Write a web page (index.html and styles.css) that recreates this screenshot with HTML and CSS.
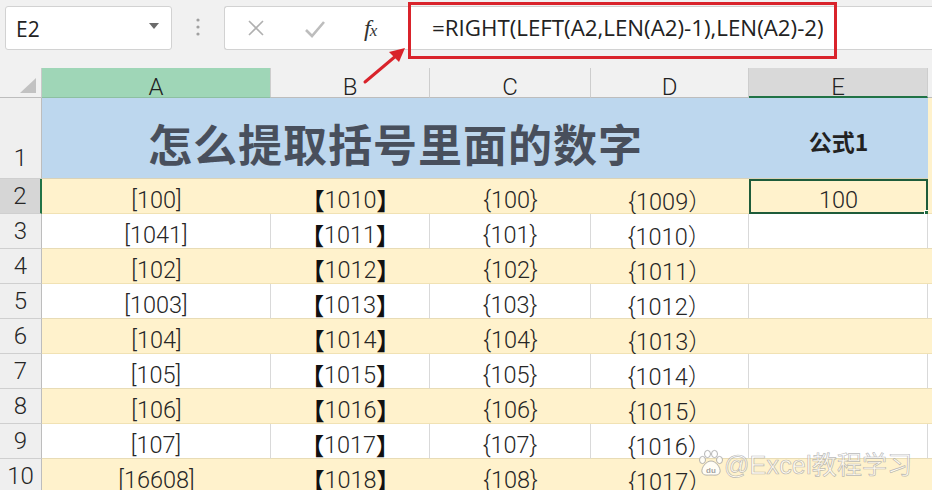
FILE: index.html
```html
<!DOCTYPE html>
<html lang="zh">
<head>
<meta charset="utf-8">
<link rel="stylesheet" href="styles.css">
</head>
<body>
<div class="app">
  <div class="toolbar">
    <div class="namebox">
      <span class="ref">E2</span>
      <svg class="caret" width="12" height="8" viewBox="0 0 12 8"><path d="M1 1 L11 1 L6 7 Z" fill="#6b6b6b"/></svg>
    </div>
    <div class="sep">
      <svg width="6" height="20" viewBox="0 0 6 20"><circle cx="3" cy="3" r="1.6" fill="#a0a0a0"/><circle cx="3" cy="10" r="1.6" fill="#a0a0a0"/><circle cx="3" cy="17" r="1.6" fill="#a0a0a0"/></svg>
    </div>
    <div class="fbar">
      <div class="fbtns">
        <svg class="btn-x" width="18" height="18" viewBox="0 0 18 18"><path d="M2 2 L16 16 M16 2 L2 16" stroke="#b0b0b0" stroke-width="1.6" fill="none"/></svg>
        <svg class="btn-ok" width="22" height="18" viewBox="0 0 22 18"><path d="M2 10 L8 16 L20 2" stroke="#bdbdbd" stroke-width="2.6" fill="none"/></svg>
        <span class="fx">f<span class="fxx">x</span></span>
      </div>
      <div class="formula">=RIGHT(LEFT(A2,LEN(A2)-1),LEN(A2)-2)</div>
    </div>
  </div>

  <div class="sheet">
    <div class="corner"><span class="tri"></span></div>
    <div class="ch ch-a">A</div>
    <div class="ch">B</div>
    <div class="ch">C</div>
    <div class="ch">D</div>
    <div class="ch ch-e">E</div>
    <div class="ch ch-f"></div>

    <div class="rh rh-1">1</div>
    <div class="c title">怎么提取括号里面的数字</div>
    <div class="c blue sub">公式1</div>
    <div class="c f1"></div>

    <div class="rh rh-sel">2</div>
    <div class="c y">[100]</div><div class="c y"><b class="lb">【</b>1010<b class="lb">】</b></div><div class="c y">{100}</div><div class="c y">{1009）</div><div class="c y sel">100<span class="handle"></span></div><div class="c y fc"></div>

    <div class="rh">3</div>
    <div class="c w">[1041]</div><div class="c w"><b class="lb">【</b>1011<b class="lb">】</b></div><div class="c w">{101}</div><div class="c w">{1010）</div><div class="c w"></div><div class="c w fc"></div>

    <div class="rh">4</div>
    <div class="c y">[102]</div><div class="c y"><b class="lb">【</b>1012<b class="lb">】</b></div><div class="c y">{102}</div><div class="c y">{1011）</div><div class="c y"></div><div class="c y fc"></div>

    <div class="rh">5</div>
    <div class="c w">[1003]</div><div class="c w"><b class="lb">【</b>1013<b class="lb">】</b></div><div class="c w">{103}</div><div class="c w">{1012）</div><div class="c w"></div><div class="c w fc"></div>

    <div class="rh">6</div>
    <div class="c y">[104]</div><div class="c y"><b class="lb">【</b>1014<b class="lb">】</b></div><div class="c y">{104}</div><div class="c y">{1013）</div><div class="c y"></div><div class="c y fc"></div>

    <div class="rh">7</div>
    <div class="c w">[105]</div><div class="c w"><b class="lb">【</b>1015<b class="lb">】</b></div><div class="c w">{105}</div><div class="c w">{1014）</div><div class="c w"></div><div class="c w fc"></div>

    <div class="rh">8</div>
    <div class="c y">[106]</div><div class="c y"><b class="lb">【</b>1016<b class="lb">】</b></div><div class="c y">{106}</div><div class="c y">{1015）</div><div class="c y"></div><div class="c y fc"></div>

    <div class="rh">9</div>
    <div class="c w">[107]</div><div class="c w"><b class="lb">【</b>1017<b class="lb">】</b></div><div class="c w">{107}</div><div class="c w">{1016）</div><div class="c w"></div><div class="c w fc"></div>

    <div class="rh">10</div>
    <div class="c y">[16608]</div><div class="c y"><b class="lb">【</b>1018<b class="lb">】</b></div><div class="c y">{108}</div><div class="c y">{1017）</div><div class="c y"></div><div class="c y fc"></div>
  </div>

  <div class="redbox"></div>
  <svg class="arrow" width="60" height="50" viewBox="0 0 60 50">
    <path d="M4 44 L36 17" stroke="#d9232b" stroke-width="3" stroke-linecap="round" fill="none"/>
    <path d="M44 10 L28 14 L38 24 Z" fill="#d9232b"/>
  </svg>

  <div class="watermark">
    <svg class="paw" width="26" height="28" viewBox="0 0 26 28">
      <g fill="rgba(255,255,255,0.8)" stroke="rgba(150,150,150,0.7)" stroke-width="1">
        <ellipse cx="4.5" cy="11" rx="3" ry="3.6"/>
        <ellipse cx="9.5" cy="5" rx="3" ry="3.6"/>
        <ellipse cx="16.5" cy="5" rx="3" ry="3.6"/>
        <ellipse cx="21.5" cy="11" rx="3" ry="3.6"/>
        <path d="M13 12 C8 12 3 19 4 23 C5 27 10 26 13 26 C16 26 21 27 22 23 C23 19 18 12 13 12 Z"/>
      </g>
      <text x="13" y="24" text-anchor="middle" font-family="Liberation Sans, sans-serif" font-size="8" font-weight="bold" fill="rgba(150,150,150,0.9)">du</text>
    </svg>
    <span class="wm-text">@Excel教程学习</span>
  </div>
</div>
</body>
</html>
```

FILE: styles.css
```css
* { box-sizing: border-box; }
html, body { margin: 0; padding: 0; }
body {
  width: 932px;
  height: 490px;
  overflow: hidden;
  background: #ffffff;
  font-family: "Roboto", "Noto Sans CJK SC", sans-serif;
}
.app { position: relative; width: 932px; height: 490px; overflow: hidden; }

.toolbar {
  height: 68px;
  background: #f1f1f1;
  display: flex;
  align-items: flex-start;
  padding-top: 6px;
  padding-left: 5px;
}
.namebox {
  width: 167px;
  height: 44px;
  background: #fff;
  border: 1px solid #d2d2d2;
  border-radius: 3px;
  display: flex;
  align-items: center;
  justify-content: space-between;
  padding: 0 11px 0 10px;
}
.ref { font-family: "Open Sans", "Noto Sans", sans-serif; font-size: 21px; color: #222; margin-top: 2px; }
.caret { margin-top: -4px; }
.sep {
  width: 52px;
  height: 44px;
  display: flex;
  align-items: center;
  justify-content: center;
  padding-bottom: 2px;
}
.fbar {
  flex: 1;
  height: 44px;
  background: #fff;
  border: 1px solid #d2d2d2;
  border-right: none;
  border-radius: 3px 0 0 3px;
  display: flex;
  align-items: center;
}
.fbtns {
  width: 184px;
  display: flex;
  align-items: center;
  padding-left: 22px;
}
.btn-x { margin-right: 39px; }
.btn-ok { margin-right: 38px; margin-top: 2px; }
.fx {
  font-family: "Liberation Serif", serif;
  font-style: italic;
  font-size: 24px;
  color: #333;
  letter-spacing: -1px;
}
.fxx { font-size: 17px; }
.formula {
  padding-left: 23px;
  font-family: "Open Sans", "Noto Sans", sans-serif;
  font-size: 22.3px;
  color: #222;
  white-space: nowrap;
  margin-top: -2px;
}

.redbox {
  position: absolute;
  left: 408px;
  top: 2px;
  width: 429px;
  height: 57px;
  border: 3px solid #d9232b;
}
.arrow { position: absolute; left: 361px; top: 38px; }

.sheet {
  display: grid;
  grid-template-columns: 42px 229px 159px 161px 158px 179px 4px;
  grid-template-rows: 30px 81px repeat(9, 35px);
  font-family: "Roboto", "Noto Sans CJK SC", sans-serif;
  font-weight: 300;
  color: #262626;
}
.corner {
  background: #f1f1f1;
  border-right: 1px solid #c9c9c9;
  border-bottom: 1px solid #bdbdbd;
  position: relative;
}
.tri {
  position: absolute;
  right: 5px;
  bottom: 4px;
  width: 0; height: 0;
  border-left: 16px solid transparent;
  border-bottom: 15px solid #c2c2c2;
}
.ch {
  background: #f1f1f1;
  border-right: 1px solid #cdcdcd;
  border-bottom: 1px solid #bdbdbd;
  display: flex;
  align-items: center;
  justify-content: center;
  padding-top: 9px;
  font-size: 24px;
  color: #222;
}
.ch-a { background: #9fd6b7; border-bottom-color: #8dbfa2; }
.ch-e { background: #d9d9d9; border-bottom: 2px solid #217346; }
.ch-f { border-right: none; }

.rh {
  background: #efefef;
  border-right: 1px solid #bdbdbd;
  border-bottom: 1px solid #cfcfcf;
  display: flex;
  align-items: flex-end;
  justify-content: center;
  padding-bottom: 0px;
  font-size: 24px;
  line-height: 33px;
  color: #262626;
}
.rh-1 { padding-bottom: 3px; }
.rh-sel { background: #d6d6d6; border-right: 2px solid #217346; }

.c {
  display: flex;
  align-items: center;
  justify-content: center;
  padding-top: 8px;
  font-size: 23.5px;
  white-space: nowrap;
  position: relative;
}
.title {
  grid-column: 2 / 6;
  background: #bdd7ee;
  font-family: "Noto Sans CJK SC", sans-serif;
  font-weight: 700;
  font-size: 44px;
  color: #484f5c;
  padding-top: 10px;
  letter-spacing: 1px;
  border-bottom: 1px solid #d9d2b8;
}
.blue { background: #bdd7ee; border-bottom: 1px solid #d9d2b8; }
.sub {
  font-family: "Noto Sans CJK SC", sans-serif;
  font-weight: 700;
  font-size: 23px;
  color: #222;
  padding-top: 6px;
}
.f1 { background: #fff2cc; }
.y { background: #fff2cc; border-bottom: 1px solid #f1e2b4; }
.w { background: #ffffff; border-right: 1px solid #d9d9d9; border-bottom: 1px solid #e8dcb6; }
.fc { border-right: none; }
.lb {
  font-family: "Noto Sans CJK SC", sans-serif;
  font-weight: 700;
  color: #111;
}
.sel {
  border: 2px solid #1e5c3a;
  padding-top: 6px;
}
.handle {
  position: absolute;
  right: -5px;
  bottom: -5px;
  width: 7px;
  height: 7px;
  background: #1e6b41;
  border: 1px solid #fff;
}

.watermark {
  position: absolute;
  left: 698px;
  top: 445px;
  display: flex;
  align-items: center;
  gap: 0px;
}
.wm-text {
  font-family: "Liberation Sans", "Noto Sans CJK SC", sans-serif;
  font-size: 25px;
  color: rgba(255, 255, 255, 0.7);
  -webkit-text-stroke: 0.7px rgba(140, 140, 140, 0.6);
  letter-spacing: 0.2px;
}
```
